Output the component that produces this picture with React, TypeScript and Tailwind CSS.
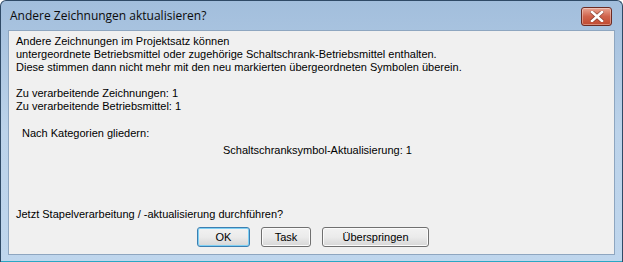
function CloseButton() {
  return (
    <div className="mt-[6px] mr-[10px] flex h-[19px] w-[31px] items-center justify-center rounded-[3px] border border-[#6b2a22] bg-gradient-to-b from-[#e8a493] via-[#d0634c] to-[#c04a30] shadow-[inset_0_0_0_1px_rgba(255,255,255,0.35)]">
      <svg width="14" height="11" viewBox="0 0 14 11">
        <path
          d="M2 1 L12 10 M12 1 L2 10"
          stroke="#4b1a12"
          strokeWidth="4"
          strokeLinecap="square"
          opacity="0.5"
        />
        <path d="M2 1 L12 10 M12 1 L2 10" stroke="#ffffff" strokeWidth="2.6" strokeLinecap="square" />
      </svg>
    </div>
  );
}

function WinButton({ label, width, focused = false }: { label: string; width: string; focused?: boolean }) {
  return (
    <button
      className={`flex h-[20px] ${width} items-center justify-center rounded-[3px] border bg-gradient-to-b from-[#f2f2f2] via-[#ebebeb] to-[#d6d6d6] text-[11px] text-black ${
        focused ? "border-[#3c7fb1] shadow-[inset_0_0_0_1px_#7fd0f4]" : "border-[#707070] shadow-[inset_0_0_0_1px_#fbfbfb]"
      }`}
    >
      {label}
    </button>
  );
}

export default function App() {
  return (
    <div className="flex h-[262px] w-[623px] flex-col overflow-hidden rounded-t-[6px] border border-[#2f4a66] border-b-0 bg-gradient-to-b from-[#a2bedc] via-[#bcd3ea] to-[#bfd6ed] font-['Liberation_Sans',Arial,sans-serif]">
      {/* Title bar */}
      <div className="flex h-[29px] shrink-0 items-start justify-between">
        <span className="mt-[8px] ml-[9px] font-['Open_Sans','Noto_Sans',sans-serif] text-[12px] leading-[14px] text-[#0b0b0b]">
          Andere Zeichnungen aktualisieren?
        </span>
        <CloseButton />
      </div>

      {/* Client area */}
      <div className="mx-[7px] flex flex-1 flex-col border border-[#8ea6c0] bg-[#f0f0f0] px-[7px] pt-[4px] text-[11px] leading-[13px] text-black">
        <p>Andere Zeichnungen im Projektsatz können</p>
        <p>untergeordnete Betriebsmittel oder zugehörige Schaltschrank-Betriebsmittel enthalten.</p>
        <p>Diese stimmen dann nicht mehr mit den neu markierten übergeordneten Symbolen überein.</p>
        <p className="mt-[13px]">Zu verarbeitende Zeichnungen: 1</p>
        <p>Zu verarbeitende Betriebsmittel: 1</p>
        <p className="mt-[14px] ml-[6px]">Nach Kategorien gliedern:</p>
        <p className="mt-[4px] ml-[207px]">Schaltschranksymbol-Aktualisierung: 1</p>
        <p className="mt-[51px]">Jetzt Stapelverarbeitung / -aktualisierung durchführen?</p>
        <div className="mt-[6px] flex gap-[11px] pl-[181px]">
          <WinButton label="OK" width="w-[53px]" focused />
          <WinButton label="Task" width="w-[50px]" />
          <WinButton label="Überspringen" width="w-[107px]" />
        </div>
      </div>

      {/* Bottom frame */}
      <div className="h-[7px] shrink-0 border-b border-[#2aa7c4]" />
    </div>
  );
}
